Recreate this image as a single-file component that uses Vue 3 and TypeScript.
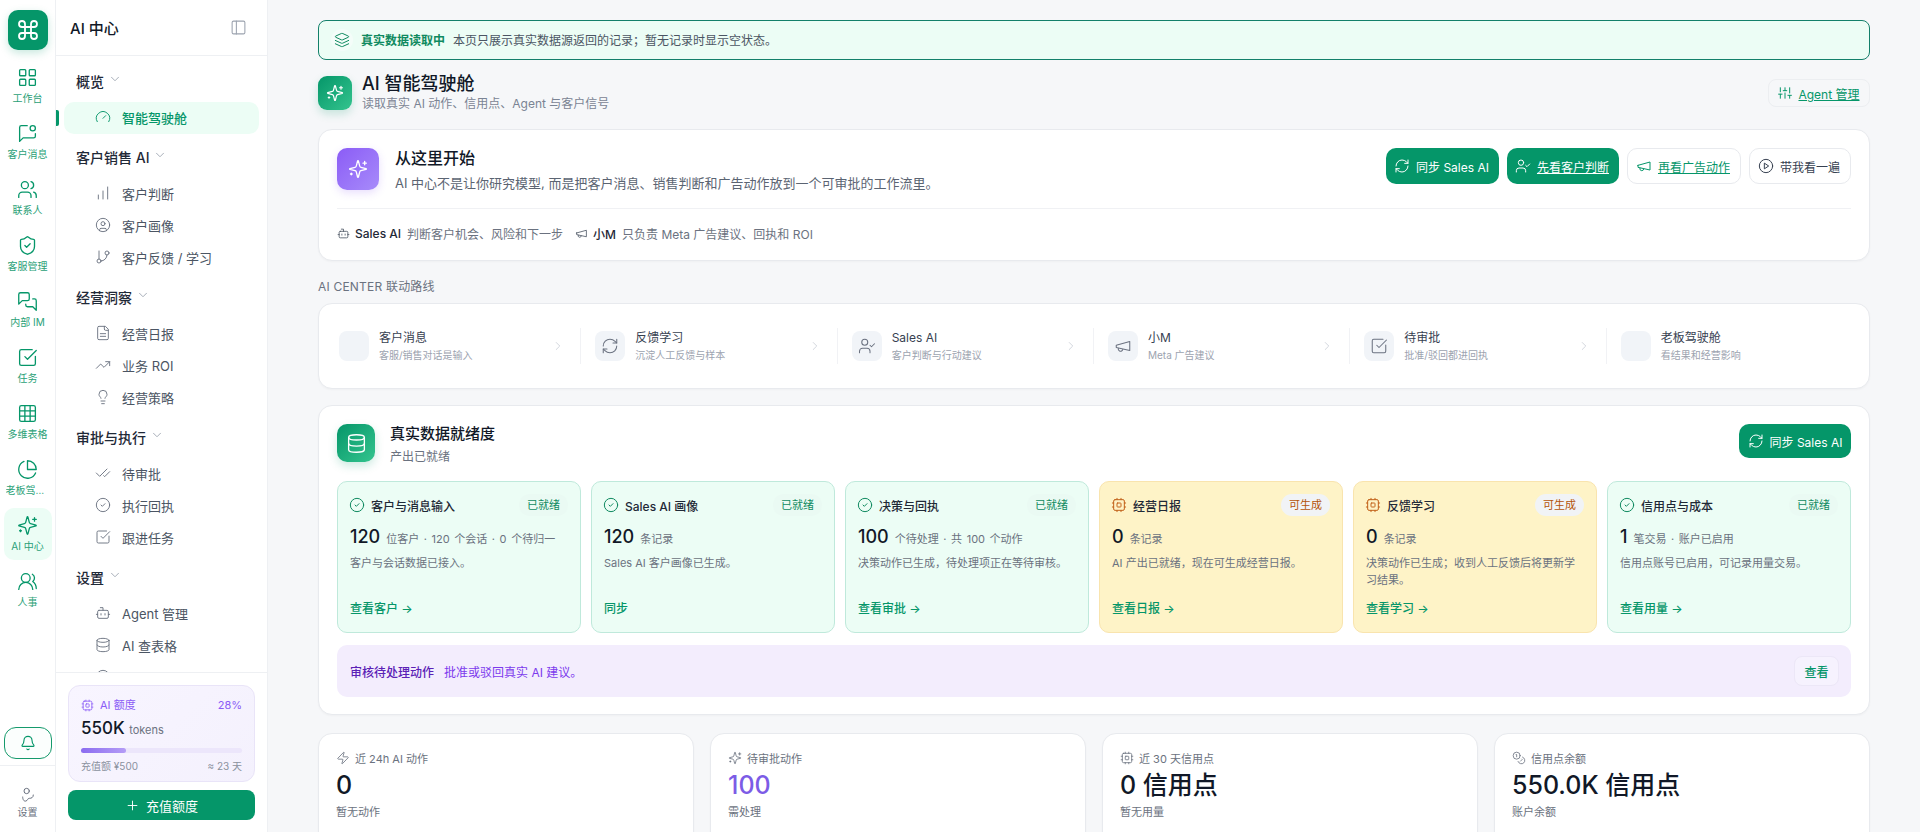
<template>
  <div class="app">
    <aside class="rail">
      <div class="logo"><svg class="ic" viewBox="0 0 24 24" v-html="icons.command"></svg></div>
      <nav class="rail-nav">
        <div v-for="r in railItems" :key="r.label" class="rail-item" :class="{ on: r.active }">
          <svg class="ic" viewBox="0 0 24 24" v-html="icons[r.icon]"></svg>
          <span>{{ r.label }}</span>
        </div>
      </nav>
      <button class="bell"><svg class="ic" viewBox="0 0 24 24" v-html="icons.bell"></svg></button>
      <div class="rail-foot">
        <svg class="ic" viewBox="0 0 24 24" v-html="icons.route"></svg>
        <span>设置</span>
      </div>
    </aside>

    <aside class="side">
      <div class="side-head">
        <span>AI 中心</span>
        <svg class="ic" viewBox="0 0 24 24" v-html="icons.panel"></svg>
      </div>
      <div class="side-nav">
        <section v-for="g in navGroups" :key="g.title" class="group">
          <div class="group-title">
            {{ g.title }}
            <svg class="ic" viewBox="0 0 24 24" v-html="icons.chevronDown"></svg>
          </div>
          <div v-for="n in g.items" :key="n.icon" class="nav-item" :class="{ on: n.active }">
            <svg class="ic" viewBox="0 0 24 24" v-html="icons[n.icon]"></svg>
            <span v-if="n.label">{{ n.label }}</span>
          </div>
        </section>
      </div>
      <div class="side-foot">
        <div class="quota">
          <div class="quota-top">
            <span class="quota-name"><svg class="ic" viewBox="0 0 24 24" v-html="icons.cpu"></svg>AI 额度</span>
            <span>28%</span>
          </div>
          <div class="quota-num">550K <small>tokens</small></div>
          <div class="track"><div class="fill" :style="{ width: '28%' }"></div></div>
          <div class="quota-bottom"><span>充值额 ¥500</span><span>≈ 23 天</span></div>
        </div>
        <button class="recharge"><svg class="ic" viewBox="0 0 24 24" v-html="icons.plus"></svg>充值额度</button>
      </div>
    </aside>

    <main class="main">
      <div class="banner">
        <span class="banner-icon"><svg class="ic" viewBox="0 0 24 24" v-html="icons.layers"></svg></span>
        <b>真实数据读取中</b>
        <span>本页只展示真实数据源返回的记录；暂无记录时显示空状态。</span>
      </div>

      <header class="page-head">
        <div class="page-icon"><svg class="ic" viewBox="0 0 24 24" v-html="icons.sparkles"></svg></div>
        <div class="page-text">
          <h1>AI 智能驾驶舱</h1>
          <p>读取真实 AI 动作、信用点、Agent 与客户信号</p>
        </div>
        <a class="agent-btn"><svg class="ic" viewBox="0 0 24 24" v-html="icons.sliders"></svg><u>Agent 管理</u></a>
      </header>

      <section class="card hero">
        <div class="hero-top">
          <div class="hero-icon"><svg class="ic" viewBox="0 0 24 24" v-html="icons.sparkles"></svg></div>
          <div class="hero-text">
            <h2>从这里开始</h2>
            <p>AI 中心不是让你研究模型, 而是把客户消息、销售判断和广告动作放到一个可审批的工作流里。</p>
          </div>
          <div class="hero-btns">
            <button class="btn primary"><svg class="ic" viewBox="0 0 24 24" v-html="icons.refresh"></svg>同步 Sales AI</button>
            <button class="btn primary"><svg class="ic" viewBox="0 0 24 24" v-html="icons.userCheck"></svg><u>先看客户判断</u></button>
            <button class="btn ghost green"><svg class="ic" viewBox="0 0 24 24" v-html="icons.megaphone"></svg><u>再看广告动作</u></button>
            <button class="btn ghost"><svg class="ic" viewBox="0 0 24 24" v-html="icons.play"></svg>带我看一遍</button>
          </div>
        </div>
        <div class="hero-notes">
          <svg class="ic" viewBox="0 0 24 24" v-html="icons.bot"></svg>
          <b>Sales AI</b><span>判断客户机会、风险和下一步</span>
          <svg class="ic second" viewBox="0 0 24 24" v-html="icons.megaphone"></svg>
          <b>小M</b><span>只负责 Meta 广告建议、回执和 ROI</span>
        </div>
      </section>

      <div class="route-label">AI CENTER 联动路线</div>
      <section class="card route">
        <div v-for="(s, i) in routeSteps" :key="s.title" class="step">
          <div class="step-icon">
            <svg v-if="s.icon" class="ic" viewBox="0 0 24 24" v-html="icons[s.icon]"></svg>
          </div>
          <div class="step-text">
            <div class="step-title">{{ s.title }}</div>
            <div class="step-sub">{{ s.sub }}</div>
          </div>
          <svg v-if="i < routeSteps.length - 1" class="ic step-arrow" viewBox="0 0 24 24" v-html="icons.chevronRight"></svg>
        </div>
      </section>

      <section class="card ready">
        <div class="ready-head">
          <div class="ready-icon"><svg class="ic" viewBox="0 0 24 24" v-html="icons.database"></svg></div>
          <div class="ready-text">
            <h3>真实数据就绪度</h3>
            <p>产出已就绪</p>
          </div>
          <button class="btn primary sync"><svg class="ic" viewBox="0 0 24 24" v-html="icons.refresh"></svg>同步 Sales AI</button>
        </div>
        <div class="tiles">
          <div v-for="t in tiles" :key="t.title" class="tile" :class="t.warn ? 'warn' : 'ok'">
            <div class="tile-head">
              <svg class="ic" viewBox="0 0 24 24" v-html="t.warn ? icons.cpu : icons.circleCheck"></svg>
              <span class="tile-title">{{ t.title }}</span>
              <span class="badge">{{ t.warn ? '可生成' : '已就绪' }}</span>
            </div>
            <div class="tile-num"><b>{{ t.num }}</b><span>{{ t.unit }}</span></div>
            <p class="tile-desc">{{ t.desc }}</p>
            <a class="tile-link">{{ t.link }}</a>
          </div>
        </div>
        <div class="review">
          <b>审核待处理动作</b>
          <span>批准或驳回真实 AI 建议。</span>
          <button>查看</button>
        </div>
      </section>

      <section class="kpis">
        <div v-for="k in kpis" :key="k.label" class="card kpi">
          <div class="kpi-head"><svg class="ic" viewBox="0 0 24 24" v-html="icons[k.icon]"></svg>{{ k.label }}</div>
          <div class="kpi-value" :class="{ violet: k.violet }">{{ k.value }}</div>
          <div class="kpi-sub">{{ k.sub }}</div>
        </div>
      </section>
    </main>
  </div>
</template>

<script setup lang="ts">
const icons: Record<string, string> = {
  command: '<path d="M15 6v12a3 3 0 1 0 3-3H6a3 3 0 1 0 3 3V6a3 3 0 1 0-3 3h12a3 3 0 1 0-3-3"/>',
  grid: '<rect x="3" y="3" width="7" height="7" rx="1"/><rect x="14" y="3" width="7" height="7" rx="1"/><rect x="14" y="14" width="7" height="7" rx="1"/><rect x="3" y="14" width="7" height="7" rx="1"/>',
  messageDot: '<path d="M11.7 3H5a2 2 0 0 0-2 2v16l4-4h12a2 2 0 0 0 2-2v-2.7"/><circle cx="18" cy="6" r="3"/>',
  users: '<path d="M16 21v-2a4 4 0 0 0-4-4H6a4 4 0 0 0-4 4v2"/><circle cx="9" cy="7" r="4"/><path d="M22 21v-2a4 4 0 0 0-3-3.87"/><path d="M16 3.13a4 4 0 0 1 0 7.75"/>',
  usersRound: '<path d="M18 21a8 8 0 0 0-16 0"/><circle cx="10" cy="8" r="5"/><path d="M22 20c0-3.37-2-6.5-4-8a5 5 0 0 0-.45-8.3"/>',
  shield: '<path d="M20 13c0 5-3.5 7.5-7.66 8.95a1 1 0 0 1-.67-.01C7.5 20.5 4 18 4 13V6a1 1 0 0 1 1-1c2 0 4.5-1.2 6.24-2.72a1.17 1.17 0 0 1 1.52 0C14.51 3.81 17 5 19 5a1 1 0 0 1 1 1z"/><path d="m9 12 2 2 4-4"/>',
  messages: '<path d="M14 9a2 2 0 0 1-2 2H6l-4 4V4a2 2 0 0 1 2-2h8a2 2 0 0 1 2 2z"/><path d="M18 9h2a2 2 0 0 1 2 2v11l-4-4h-6a2 2 0 0 1-2-2v-1"/>',
  squareCheck: '<path d="M21 10.656V19a2 2 0 0 1-2 2H5a2 2 0 0 1-2-2V5a2 2 0 0 1 2-2h12.344"/><path d="m9 11 3 3L22 4"/>',
  table: '<rect x="3" y="3" width="18" height="18" rx="2"/><path d="M3 9h18M3 15h18M9 3v18M15 3v18"/>',
  pie: '<path d="M21.21 15.89A10 10 0 1 1 8 2.83"/><path d="M22 12A10 10 0 0 0 12 2v10z"/>',
  sparkles: '<path d="M9.937 15.5A2 2 0 0 0 8.5 14.063l-6.135-1.582a.5.5 0 0 1 0-.962L8.5 9.936A2 2 0 0 0 9.937 8.5l1.582-6.135a.5.5 0 0 1 .963 0L14.063 8.5A2 2 0 0 0 15.5 9.937l6.135 1.581a.5.5 0 0 1 0 .964L15.5 14.063a2 2 0 0 0-1.437 1.437l-1.582 6.135a.5.5 0 0 1-.963 0z"/><path d="M20 3v4M22 5h-4M4 17v2M5 18H3"/>',
  bell: '<path d="M10.268 21a2 2 0 0 0 3.464 0"/><path d="M3.262 15.326A1 1 0 0 0 4 17h16a1 1 0 0 0 .74-1.673C19.41 13.956 18 12.499 18 8A6 6 0 0 0 6 8c0 4.499-1.411 5.956-2.738 7.326"/>',
  route: '<circle cx="10" cy="6" r="4"/><path d="M4 15c0 4 2 7 5 6 3-1 2-4 5-4s6-1 6-5"/>',
  panel: '<rect x="3" y="3" width="18" height="18" rx="2"/><path d="M9 3v18"/>',
  chevronDown: '<path d="m6 9 6 6 6-6"/>',
  chevronRight: '<path d="m9 18 6-6-6-6"/>',
  gauge: '<path d="m12 14 4-4"/><path d="M3.34 19a10 10 0 1 1 17.32 0"/>',
  bars: '<path d="M5 21v-6M12 21V9M19 21V3"/>',
  circleUser: '<circle cx="12" cy="12" r="10"/><circle cx="12" cy="10" r="3"/><path d="M7 20.662V19a2 2 0 0 1 2-2h6a2 2 0 0 1 2 2v1.662"/>',
  branch: '<path d="M6 3v12"/><circle cx="18" cy="6" r="3"/><circle cx="6" cy="18" r="3"/><path d="M18 9a9 9 0 0 1-9 9"/>',
  file: '<path d="M15 2H6a2 2 0 0 0-2 2v16a2 2 0 0 0 2 2h12a2 2 0 0 0 2-2V7Z"/><path d="M14 2v4a2 2 0 0 0 2 2h4"/><path d="M16 13H8M16 17H8"/>',
  trend: '<path d="m22 7-8.5 8.5-5-5L2 17"/><path d="M16 7h6v6"/>',
  bulb: '<path d="M15 14c.2-1 .7-1.7 1.5-2.5 1-.9 1.5-2.2 1.5-3.5A6 6 0 0 0 6 8c0 1 .2 2.2 1.5 3.5.7.7 1.3 1.5 1.5 2.5"/><path d="M9 18h6M10 22h4"/>',
  checkCheck: '<path d="M18 6 7 17l-5-5"/><path d="m22 10-7.5 7.5L13 16"/>',
  circleCheck: '<circle cx="12" cy="12" r="10"/><path d="m9 12 2 2 4-4"/>',
  bot: '<path d="M12 8V4H8"/><rect x="4" y="8" width="16" height="12" rx="2"/><path d="M2 14h2M20 14h2M15 13v2M9 13v2"/>',
  database: '<ellipse cx="12" cy="5" rx="9" ry="3"/><path d="M3 5v14a9 3 0 0 0 18 0V5"/><path d="M3 12a9 3 0 0 0 18 0"/>',
  cpu: '<rect x="4" y="4" width="16" height="16" rx="2"/><rect x="9" y="9" width="6" height="6" rx="1"/><path d="M15 2v2M15 20v2M2 15h2M2 9h2M20 15h2M20 9h2M9 2v2M9 20v2"/>',
  plus: '<path d="M5 12h14M12 5v14"/>',
  layers: '<path d="m12.83 2.18a2 2 0 0 0-1.66 0L2.6 6.08a1 1 0 0 0 0 1.83l8.58 3.91a2 2 0 0 0 1.66 0l8.58-3.9a1 1 0 0 0 0-1.83Z"/><path d="m22 17.65-9.17 4.16a2 2 0 0 1-1.66 0L2 17.65"/><path d="m22 12.65-9.17 4.16a2 2 0 0 1-1.66 0L2 12.65"/>',
  sliders: '<path d="M4 21v-7M4 10V3M12 21v-9M12 8V3M20 21v-5M20 12V3M1 14h6M9 8h6M17 16h6"/>',
  refresh: '<path d="M3 12a9 9 0 0 1 9-9 9.75 9.75 0 0 1 6.74 2.74L21 8"/><path d="M21 3v5h-5"/><path d="M21 12a9 9 0 0 1-9 9 9.75 9.75 0 0 1-6.74-2.74L3 16"/><path d="M8 16H3v5"/>',
  userCheck: '<path d="M16 21v-2a4 4 0 0 0-4-4H6a4 4 0 0 0-4 4v2"/><circle cx="9" cy="7" r="4"/><path d="m16 11 2 2 4-4"/>',
  megaphone: '<path d="m3 11 18-5v12L3 14v-3z"/><path d="M11.6 16.8a3 3 0 1 1-5.8-1.6"/>',
  play: '<circle cx="12" cy="12" r="10"/><path d="m10 8 6 4-6 4z"/>',
  zap: '<path d="M4 14a1 1 0 0 1-.78-1.63l9.9-10.2a.5.5 0 0 1 .86.46l-1.92 6.02A1 1 0 0 0 13 10h7a1 1 0 0 1 .78 1.63l-9.9 10.2a.5.5 0 0 1-.86-.46l1.92-6.02A1 1 0 0 0 11 14z"/>',
  coins: '<circle cx="8" cy="8" r="6"/><path d="M18.09 10.37A6 6 0 1 1 10.34 18"/><path d="M7 6h1v4"/><path d="m16.71 13.88.7.71-2.82 2.82"/>'
}

const railItems = [
  { icon: 'grid', label: '工作台' },
  { icon: 'messageDot', label: '客户消息' },
  { icon: 'users', label: '联系人' },
  { icon: 'shield', label: '客服管理' },
  { icon: 'messages', label: '内部 IM' },
  { icon: 'squareCheck', label: '任务' },
  { icon: 'table', label: '多维表格' },
  { icon: 'pie', label: '老板驾驶舱' },
  { icon: 'sparkles', label: 'AI 中心', active: true },
  { icon: 'usersRound', label: '人事' }
]

const navGroups = [
  { title: '概览', items: [{ icon: 'gauge', label: '智能驾驶舱', active: true }] },
  {
    title: '客户销售 AI',
    items: [
      { icon: 'bars', label: '客户判断' },
      { icon: 'circleUser', label: '客户画像' },
      { icon: 'branch', label: '客户反馈 / 学习' }
    ]
  },
  {
    title: '经营洞察',
    items: [
      { icon: 'file', label: '经营日报' },
      { icon: 'trend', label: '业务 ROI' },
      { icon: 'bulb', label: '经营策略' }
    ]
  },
  {
    title: '审批与执行',
    items: [
      { icon: 'checkCheck', label: '待审批' },
      { icon: 'circleCheck', label: '执行回执' },
      { icon: 'squareCheck', label: '跟进任务' }
    ]
  },
  {
    title: '设置',
    items: [
      { icon: 'bot', label: 'Agent 管理' },
      { icon: 'database', label: 'AI 查表格' },
      // 这一项被底部额度卡遮住，只露出图标顶部
      { icon: 'circleUser', label: '' }
    ]
  }
]

const routeSteps = [
  { icon: '', title: '客户消息', sub: '客服/销售对话是输入' },
  { icon: 'refresh', title: '反馈学习', sub: '沉淀人工反馈与样本' },
  { icon: 'userCheck', title: 'Sales AI', sub: '客户判断与行动建议' },
  { icon: 'megaphone', title: '小M', sub: 'Meta 广告建议' },
  { icon: 'squareCheck', title: '待审批', sub: '批准/驳回都进回执' },
  { icon: '', title: '老板驾驶舱', sub: '看结果和经营影响' }
]

const tiles = [
  { title: '客户与消息输入', num: '120', unit: '位客户 · 120 个会话 · 0 个待归一', desc: '客户与会话数据已接入。', link: '查看客户 →' },
  { title: 'Sales AI 画像', num: '120', unit: '条记录', desc: 'Sales AI 客户画像已生成。', link: '同步' },
  { title: '决策与回执', num: '100', unit: '个待处理 · 共 100 个动作', desc: '决策动作已生成，待处理项正在等待审核。', link: '查看审批 →' },
  { title: '经营日报', num: '0', unit: '条记录', desc: 'AI 产出已就绪，现在可生成经营日报。', link: '查看日报 →', warn: true },
  { title: '反馈学习', num: '0', unit: '条记录', desc: '决策动作已生成；收到人工反馈后将更新学习结果。', link: '查看学习 →', warn: true },
  { title: '信用点与成本', num: '1', unit: '笔交易 · 账户已启用', desc: '信用点账号已启用，可记录用量交易。', link: '查看用量 →' }
]

const kpis = [
  { icon: 'zap', label: '近 24h AI 动作', value: '0', sub: '暂无动作' },
  { icon: 'sparkles', label: '待审批动作', value: '100', sub: '需处理', violet: true },
  { icon: 'cpu', label: '近 30 天信用点', value: '0 信用点', sub: '暂无用量' },
  { icon: 'coins', label: '信用点余额', value: '550.0K 信用点', sub: '账户余额' }
]
</script>

<style>
html, body {
  margin: 0;
  overflow: hidden;
}
</style>

<style scoped>
* {
  box-sizing: border-box;
}

.app {
  display: flex;
  height: 832px;
  overflow: hidden;
  background: #f6f7f9;
  color: #111827;
  font-family: Inter, "Noto Sans CJK SC", sans-serif;
}

.ic {
  width: 14px;
  height: 14px;
  flex-shrink: 0;
  fill: none;
  stroke: currentColor;
  stroke-width: 1.7;
  stroke-linecap: round;
  stroke-linejoin: round;
}

button {
  font-family: inherit;
  cursor: pointer;
}

h1, h2, h3, p {
  margin: 0;
}

/* 左侧图标栏 */
.rail {
  width: 56px;
  flex-shrink: 0;
  display: flex;
  flex-direction: column;
  align-items: center;
  background: #fff;
  border-right: 1px solid #eef0f3;
  padding-top: 10px;
}

.logo {
  width: 40px;
  height: 40px;
  border-radius: 10px;
  background: #059669;
  color: #fff;
  display: flex;
  align-items: center;
  justify-content: center;
  box-shadow: 0 3px 8px rgba(5, 150, 105, 0.22);
  margin-bottom: 10px;
}

.logo .ic {
  width: 24px;
  height: 24px;
  stroke-width: 1.8;
}

.rail-nav {
  flex: 1;
  display: flex;
  flex-direction: column;
  gap: 4px;
}

.rail-item {
  width: 48px;
  height: 52px;
  padding-top: 7px;
  border-radius: 10px;
  display: flex;
  flex-direction: column;
  align-items: center;
  gap: 3px;
  color: #059669;
}

.rail-item .ic {
  width: 21px;
  height: 21px;
  stroke-width: 1.5;
}

.rail-item span {
  width: 44px;
  font-size: 10px;
  line-height: 14px;
  text-align: center;
  white-space: nowrap;
  overflow: hidden;
  text-overflow: ellipsis;
  color: #2a9f77;
}

.rail-item.on {
  background: #ecfdf5;
}

.bell {
  width: 48px;
  height: 32px;
  border: 1px solid #159a6c;
  border-radius: 12px;
  background: #fbfefd;
  color: #059669;
  display: flex;
  align-items: center;
  justify-content: center;
  padding: 0;
}

.bell .ic {
  width: 16px;
  height: 16px;
}

.rail-foot {
  width: 100%;
  height: 67px;
  margin-top: 6px;
  border-top: 1px solid #eef0f3;
  padding-top: 21px;
  display: flex;
  flex-direction: column;
  align-items: center;
  gap: 2px;
  color: #6b7280;
  font-size: 10px;
  line-height: 14px;
}

.rail-foot .ic {
  width: 16px;
  height: 16px;
  stroke-width: 1.5;
}

/* 二级导航 */
.side {
  width: 212px;
  flex-shrink: 0;
  display: flex;
  flex-direction: column;
  background: #fff;
  border-right: 1px solid #eef0f3;
}

.side-head {
  height: 56px;
  flex-shrink: 0;
  border-bottom: 1px solid #eef0f3;
  padding: 0 20px 0 14px;
  display: flex;
  align-items: center;
  justify-content: space-between;
  font-size: 15px;
  font-weight: 500;
}

.side-head .ic {
  width: 17px;
  height: 17px;
  color: #9ca3af;
  stroke-width: 1.5;
}

.side-nav {
  flex: 1;
  min-height: 0;
  overflow: hidden;
  padding: 15px 8px 0;
}

.group + .group {
  margin-top: 13px;
}

.group-title {
  height: 20px;
  margin-bottom: 11px;
  padding-left: 12px;
  display: flex;
  align-items: center;
  gap: 4px;
  font-size: 14px;
  font-weight: 500;
  color: #1f2937;
}

.group-title .ic {
  color: #9ca3af;
  stroke-width: 1.5;
  margin-top: -4px;
}

.nav-item {
  position: relative;
  height: 32px;
  padding: 0 0 2px 31px;
  border-radius: 10px;
  display: flex;
  align-items: center;
  gap: 11px;
  font-size: 13px;
  color: #4b5563;
}

.nav-item .ic {
  width: 16px;
  height: 16px;
  stroke-width: 1.4;
  color: #6b7280;
}

.nav-item.on {
  background: #ecfdf5;
  color: #059669;
  font-weight: 500;
}

.nav-item.on .ic {
  color: #059669;
}

.nav-item.on::before {
  content: "";
  position: absolute;
  left: -8px;
  top: 8px;
  width: 3px;
  height: 16px;
  background: #059669;
  border-radius: 0 2px 2px 0;
}

.side-foot {
  height: 160px;
  flex-shrink: 0;
  border-top: 1px solid #eef0f3;
  padding: 12px 12px 0;
}

.quota {
  height: 97px;
  padding: 11px 12px 0;
  border: 1px solid #e9e4f8;
  border-radius: 12px;
  background: linear-gradient(135deg, #f8f5ff, #f4f1fd);
}

.quota-top {
  display: flex;
  justify-content: space-between;
  font-size: 11px;
  line-height: 16px;
  color: #8b5cf6;
}

.quota-name {
  display: flex;
  align-items: center;
  gap: 6px;
}

.quota-name .ic {
  width: 13px;
  height: 13px;
  stroke-width: 1.5;
}

.quota-num {
  margin-top: 4px;
  font-size: 17px;
  line-height: 22px;
  font-weight: 500;
  color: #111827;
}

.quota-num small {
  font-size: 11px;
  font-weight: 400;
  color: #6b7280;
}

.track {
  height: 5px;
  margin-top: 7px;
  border-radius: 3px;
  background: #ece6fb;
}

.fill {
  height: 100%;
  border-radius: 3px;
  background: linear-gradient(90deg, #8b6cf0, #b49cf6);
}

.quota-bottom {
  margin-top: 6px;
  display: flex;
  justify-content: space-between;
  font-size: 10px;
  line-height: 14px;
  color: #8a919e;
}

.recharge {
  width: 100%;
  height: 30px;
  margin-top: 8px;
  border: 0;
  border-radius: 8px;
  background: #059669;
  color: #fff;
  font-size: 13px;
  font-weight: 400;
  display: flex;
  align-items: center;
  justify-content: center;
  gap: 6px;
}

.recharge .ic {
  width: 15px;
  height: 15px;
  stroke-width: 1.5;
}

/* 主内容 */
.main {
  flex: 1;
  min-width: 0;
  padding: 20px 50px 0;
  overflow: hidden;
}

.banner {
  height: 40px;
  padding: 0 12px 2px;
  border: 1px solid #13806a;
  border-radius: 8px;
  background: #ecfdf5;
  display: flex;
  align-items: center;
  font-size: 12px;
  color: #4b5563;
}

.banner-icon {
  width: 22px;
  height: 22px;
  margin-top: 2px;
  border-radius: 50%;
  background: #f4fdf9;
  color: #0f8a60;
  display: flex;
  align-items: center;
  justify-content: center;
  margin-right: 8px;
}

.banner-icon .ic {
  width: 16px;
  height: 16px;
  stroke-width: 1.5;
}

.banner b {
  color: #0f8a60;
  font-weight: 600;
  margin-right: 8px;
}

.page-head {
  height: 34px;
  margin-top: 16px;
  display: flex;
  align-items: center;
}

.page-icon {
  width: 34px;
  height: 34px;
  border-radius: 9px;
  background: linear-gradient(135deg, #059669, #34c48e);
  color: #fff;
  display: flex;
  align-items: center;
  justify-content: center;
  box-shadow: 0 4px 10px rgba(5, 150, 105, 0.2);
  margin-right: 10px;
}

.page-icon .ic {
  width: 18px;
  height: 18px;
  stroke-width: 1.6;
}

.page-text {
  flex: 1;
}

.page-text h1 {
  font-size: 18px;
  line-height: 22px;
  font-weight: 500;
  margin-top: -2px;
}

.page-text p {
  font-size: 12px;
  line-height: 16px;
  color: #7b8494;
  margin-top: 1px;
}

.agent-btn {
  width: 102px;
  height: 28px;
  border: 1px solid #eceef1;
  border-radius: 8px;
  display: flex;
  align-items: center;
  justify-content: center;
  gap: 6px;
  font-size: 12px;
  color: #059669;
}

.card {
  background: #fff;
  border: 1px solid #e8eaee;
  border-radius: 14px;
  box-shadow: 0 1px 2px rgba(17, 24, 39, 0.03);
}

.hero {
  height: 132px;
  margin-top: 19px;
  padding: 18px 18px 0;
}

.hero-top {
  display: flex;
  align-items: flex-start;
  padding-bottom: 15px;
  border-bottom: 1px solid #f0f1f4;
  height: 61px;
}

.hero-icon {
  width: 42px;
  height: 42px;
  margin-right: 16px;
  border-radius: 10px;
  background: linear-gradient(135deg, #8b5cf6, #a78bfa);
  color: #fff;
  display: flex;
  align-items: center;
  justify-content: center;
  box-shadow: 0 3px 8px rgba(139, 92, 246, 0.2);
}

.hero-icon .ic {
  width: 20px;
  height: 20px;
  stroke-width: 1.6;
}

.hero-text {
  flex: 1;
}

.hero-text h2 {
  font-size: 16px;
  line-height: 20px;
  font-weight: 500;
}

.hero-text p {
  margin-top: 5px;
  font-size: 13px;
  line-height: 20px;
  color: #5b6472;
}

.hero-btns {
  display: flex;
  gap: 8px;
}

.btn {
  height: 36px;
  padding: 0 10px 0 8px;
  border-radius: 10px;
  font-size: 12px;
  font-weight: 400;
  display: flex;
  align-items: center;
  gap: 6px;
  white-space: nowrap;
}

.btn .ic {
  width: 16px;
  height: 16px;
  stroke-width: 1.5;
}

.btn.primary {
  background: #059669;
  color: #fff;
  border: 0;
}

.btn.ghost {
  background: #fff;
  border: 1px solid #e8eaee;
  color: #374151;
}

.btn.ghost.green {
  color: #059669;
}

.hero-notes {
  display: flex;
  align-items: center;
  margin-top: 15px;
  height: 18px;
  font-size: 12px;
  color: #6b7280;
}

.hero-notes .ic {
  width: 13px;
  height: 13px;
  stroke-width: 1.5;
  margin-right: 5px;
  color: #4b5563;
}

.hero-notes .ic.second {
  margin-left: 12px;
}

.hero-notes b {
  font-weight: 500;
  color: #1f2937;
  margin-right: 6px;
}

.route-label {
  margin-top: 18px;
  height: 16px;
  font-size: 12px;
  line-height: 16px;
  letter-spacing: 0.2px;
  color: #6b7280;
}

.route {
  height: 86px;
  margin-top: 8px;
  padding: 24px 6px;
  display: grid;
  grid-template-columns: repeat(6, 1fr);
}

.step {
  position: relative;
  height: 36px;
  padding: 3px 14px;
  display: flex;
  align-items: center;
  gap: 10px;
  border-right: 1px solid #f1f2f5;
}

.step:last-child {
  border-right: 0;
}

.step-icon {
  width: 30px;
  height: 30px;
  flex-shrink: 0;
  border-radius: 8px;
  background: #f1f4f8;
  color: #6b7280;
  display: flex;
  align-items: center;
  justify-content: center;
}

.step-icon .ic {
  width: 18px;
  height: 18px;
  stroke-width: 1.4;
}

.step-text {
  flex: 1;
}

.step-title {
  font-size: 12px;
  line-height: 16px;
  color: #374151;
  font-weight: 400;
}

.step-sub {
  margin-top: 2px;
  font-size: 10px;
  line-height: 14px;
  color: #9ca3af;
}

.step-arrow {
  width: 14px;
  height: 14px;
  color: #c9ced6;
  stroke-width: 1.4;
  margin-right: 1px;
}

.ready {
  height: 310px;
  margin-top: 16px;
  padding: 18px;
}

.ready-head {
  height: 42px;
  display: flex;
  align-items: flex-start;
  margin-bottom: 15px;
}

.ready-icon {
  width: 38px;
  height: 38px;
  margin-right: 15px;
  border-radius: 10px;
  background: linear-gradient(135deg, #059669, #34c48e);
  color: #fff;
  display: flex;
  align-items: center;
  justify-content: center;
  box-shadow: 0 4px 10px rgba(5, 150, 105, 0.2);
}

.ready-icon .ic {
  width: 21px;
  height: 21px;
  stroke-width: 1.5;
}

.ready-text {
  flex: 1;
}

.ready-text h3 {
  font-size: 15px;
  line-height: 20px;
  font-weight: 500;
}

.ready-text p {
  margin-top: 4px;
  font-size: 12px;
  line-height: 18px;
  color: #6b7280;
}

.btn.sync {
  height: 34px;
  width: 112px;
  justify-content: center;
  padding: 0;
}

.tiles {
  display: grid;
  grid-template-columns: repeat(6, 1fr);
  gap: 10px;
}

.tile {
  height: 152px;
  padding: 12px 12px 14px;
  border: 1px solid;
  border-radius: 10px;
  display: flex;
  flex-direction: column;
}

.tile.ok {
  background: #ecfdf5;
  border-color: #bfe9db;
}

.tile.warn {
  background: #fef3c7;
  border-color: #f9e4ae;
}

.tile-head {
  height: 22px;
  display: flex;
  align-items: center;
  gap: 6px;
}

.tile-head .ic {
  width: 16px;
  height: 16px;
  stroke-width: 1.5;
  margin-left: -1px;
}

.tile.ok .tile-head .ic {
  color: #0f8a60;
}

.tile.warn .tile-head .ic {
  color: #c2621a;
}

.tile-title {
  flex: 1;
  font-size: 12px;
  font-weight: 500;
  color: #1f2937;
}

.badge {
  height: 22px;
  padding: 0 8px;
  border-radius: 11px;
  font-size: 11px;
  line-height: 22px;
}

.tile.ok .badge {
  background: #eafaf3;
  color: #0f8a60;
}

.tile.warn .badge {
  background: #f1f3f6;
  color: #b45309;
}

.tile-num {
  margin-top: 9px;
  height: 24px;
  display: flex;
  align-items: baseline;
  gap: 6px;
  white-space: nowrap;
}

.tile-num b {
  font-size: 18px;
  line-height: 24px;
  font-weight: 500;
  color: #111827;
}

.tile-num span {
  font-size: 11px;
  word-spacing: 1.5px;
  color: #6b7280;
}

.tile-desc {
  margin-top: 6px;
  font-size: 11px;
  line-height: 17px;
  color: #6b7280;
}

.tile-link {
  margin-top: auto;
  font-size: 12px;
  line-height: 18px;
  font-weight: 500;
  color: #059669;
}

.review {
  height: 52px;
  margin-top: 12px;
  padding: 0 12px 0 13px;
  border-radius: 10px;
  background: #f3edfd;
  display: flex;
  align-items: center;
  font-size: 12px;
}

.review b {
  font-weight: 500;
  color: #5b21b6;
  margin-right: 10px;
}

.review span {
  flex: 1;
  color: #7c3aed;
}

.review button {
  width: 45px;
  height: 30px;
  border: 1px solid #ece7f7;
  border-radius: 8px;
  background: #f6f2fe;
  color: #059669;
  font-size: 12px;
  font-weight: 500;
  padding: 0;
}

.kpis {
  display: grid;
  grid-template-columns: repeat(4, 1fr);
  gap: 16px;
  margin-top: 18px;
}

.kpi {
  height: 120px;
  padding: 16px 17px;
}

.kpi-head {
  height: 16px;
  display: flex;
  align-items: center;
  gap: 5px;
  font-size: 11px;
  color: #6b7280;
}

.kpi-head .ic {
  width: 14px;
  height: 14px;
  stroke-width: 1.4;
}

.kpi-value {
  margin-top: 4px;
  font-size: 25px;
  line-height: 30px;
  font-weight: 500;
  color: #111827;
}

.kpi-value.violet {
  color: #7c5ce6;
}

.kpi-sub {
  margin-top: 4px;
  font-size: 11px;
  line-height: 16px;
  color: #6b7280;
}
</style>
